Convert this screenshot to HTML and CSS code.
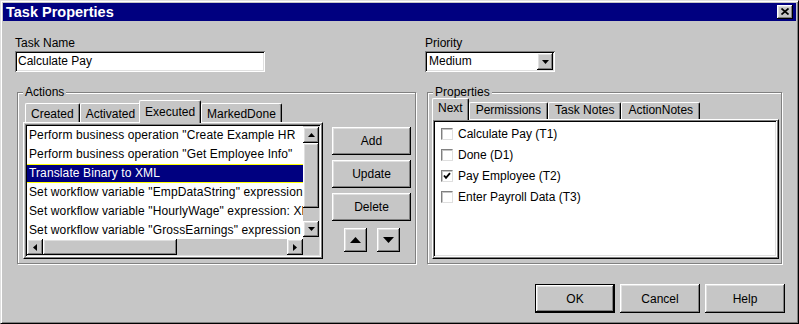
FILE: index.html
```html
<!DOCTYPE html>
<html lang="en">
<head>
<meta charset="utf-8">
<title>Task Properties</title>
<link rel="stylesheet" href="styles.css">
</head>
<body>
<div class="window">
  <div class="titlebar">
    <span class="title">Task Properties</span>
    <span class="close raised"><svg width="8" height="7" viewBox="0 0 8 7"><path d="M0.5 0.5L7.5 6.5M7.5 0.5L0.5 6.5" stroke="#000" stroke-width="1.7" fill="none"/></svg></span>
  </div>
  <div class="content">
    <div class="fields">
      <div class="field">
        <span class="label">Task Name</span>
        <div class="textbox sunken">Calculate Pay</div>
      </div>
      <div class="field">
        <span class="label">Priority</span>
        <div class="combo sunken">
          <span class="combo-text">Medium</span>
          <span class="combo-btn raised"><svg width="7" height="4" viewBox="0 0 7 4"><path d="M0 0H7L3.5 4Z" fill="#000"/></svg></span>
        </div>
      </div>
    </div>

    <div class="groups">
      <div class="group group-actions">
        <span class="legend">Actions</span>
        <div class="tabpane tabpane-actions">
          <div class="tabs tabs-actions">
            <div class="tab">Created</div>
            <div class="tab">Activated</div>
            <div class="tab tab-active">Executed</div>
            <div class="tab">MarkedDone</div>
          </div>
          <div class="panel panel-actions">
            <div class="listbox sunken">
              <div class="rows">
                <div class="row">Perform business operation "Create Example HR</div>
                <div class="row">Perform business operation "Get Employee Info"</div>
                <div class="row row-selected">Translate Binary to XML</div>
                <div class="row">Set workflow variable "EmpDataString" expression</div>
                <div class="row">Set workflow variable "HourlyWage" expression: XP</div>
                <div class="row">Set workflow variable "GrossEarnings" expression</div>
              </div>
              <div class="vscroll">
                <span class="sbtn raised"><svg width="7" height="4" viewBox="0 0 7 4"><path d="M0 4H7L3.5 0Z" fill="#000"/></svg></span>
                <span class="vthumb raised"></span>
                <span class="track"></span>
                <span class="sbtn raised"><svg width="7" height="4" viewBox="0 0 7 4"><path d="M0 0H7L3.5 4Z" fill="#000"/></svg></span>
              </div>
              <div class="hscroll">
                <span class="sbtn raised"><svg width="4" height="7" viewBox="0 0 4 7"><path d="M4 0V7L0 3.5Z" fill="#000"/></svg></span>
                <span class="hthumb raised"></span>
                <span class="track"></span>
                <span class="sbtn raised"><svg width="4" height="7" viewBox="0 0 4 7"><path d="M0 0V7L4 3.5Z" fill="#000"/></svg></span>
              </div>
              <div class="corner"></div>
            </div>
          </div>
        </div>
        <div class="side">
          <div class="btn raised">Add</div>
          <div class="btn raised">Update</div>
          <div class="btn raised">Delete</div>
          <div class="move">
            <span class="move-btn raised"><svg width="11" height="6" viewBox="0 0 11 6"><path d="M0 6H11L5.5 0Z" fill="#000"/></svg></span>
            <span class="move-btn raised"><svg width="11" height="6" viewBox="0 0 11 6"><path d="M0 0H11L5.5 6Z" fill="#000"/></svg></span>
          </div>
        </div>
      </div>

      <div class="group group-props">
        <span class="legend">Properties</span>
        <div class="tabpane tabpane-props">
          <div class="tabs tabs-props">
            <div class="tab tab-active">Next</div>
            <div class="tab">Permissions</div>
            <div class="tab">Task Notes</div>
            <div class="tab">ActionNotes</div>
          </div>
          <div class="panel panel-props">
            <div class="checklist sunken">
              <div class="check-row"><span class="checkbox"></span><span>Calculate Pay (T1)</span></div>
              <div class="check-row"><span class="checkbox"></span><span>Done (D1)</span></div>
              <div class="check-row"><span class="checkbox"><svg width="8" height="8" viewBox="0 0 8 8"><path d="M1 3.5L3 5.8L7 1.2" stroke="#000" stroke-width="1.9" fill="none"/></svg></span><span>Pay Employee (T2)</span></div>
              <div class="check-row"><span class="checkbox"></span><span>Enter Payroll Data (T3)</span></div>
            </div>
          </div>
        </div>
      </div>
    </div>

    <div class="footer">
      <div class="dlg-btn dlg-default"><span class="dlg-inner raised">OK</span></div>
      <div class="dlg-btn"><span class="dlg-inner raised">Cancel</span></div>
      <div class="dlg-btn"><span class="dlg-inner raised">Help</span></div>
    </div>
  </div>
</div>
</body>
</html>
```

FILE: styles.css
```css
* { box-sizing: border-box; }

html, body {
  margin: 0;
  padding: 0;
}

body {
  width: 799px;
  height: 324px;
  overflow: hidden;
  background: #c6c6c6;
  font-family: "Liberation Sans", Arial, sans-serif;
  font-size: 12px;
  line-height: 14px;
  color: #000;
}

.raised {
  background: #c6c6c6;
  box-shadow: inset -1px -1px 0 #000, inset 1px 1px 0 #fff, inset -2px -2px 0 #808080, inset 2px 2px 0 #dfdfdf;
}

.sunken {
  background: #fff;
  box-shadow: inset 1px 1px 0 #808080, inset -1px -1px 0 #fff, inset 2px 2px 0 #000, inset -2px -2px 0 #dfdfdf;
}

.window {
  width: 799px;
  height: 324px;
  background: #c6c6c6;
  border: 1px solid;
  border-color: #dfdfdf #000 #000 #dfdfdf;
  box-shadow: inset 1px 1px 0 #fff, inset -1px -1px 0 #808080;
  padding: 2px;
  display: flex;
  flex-direction: column;
}

.titlebar {
  height: 18px;
  background: #000080;
  display: flex;
  align-items: center;
  justify-content: space-between;
  padding: 0 3px 0 3px;
}

.title {
  color: #fff;
  font-weight: bold;
  font-size: 14.5px;
  line-height: 18px;
}

.close {
  width: 16px;
  height: 14px;
  display: flex;
  align-items: center;
  justify-content: center;
  padding-bottom: 1px;
}

.content {
  flex: 1;
  padding: 15px 11px 0 12px;
  display: flex;
  flex-direction: column;
}

.fields {
  display: grid;
  grid-template-columns: 410px 130px;
}

.label {
  display: block;
  height: 14px;
  margin-bottom: 1px;
}

.textbox {
  width: 250px;
  height: 21px;
  padding: 3px 3px 0 3px;
  white-space: nowrap;
}

.combo {
  width: 130px;
  height: 21px;
  padding: 2px;
  display: flex;
}

.combo-text {
  flex: 1;
  padding: 1px 0 0 2px;
}

.combo-btn {
  width: 16px;
  height: 17px;
  display: flex;
  align-items: center;
  justify-content: center;
}

.groups {
  display: flex;
  gap: 11px;
  margin: 20px 0 0 2px;
}

.group {
  position: relative;
  height: 172px;
  border: 1px solid #808080;
  box-shadow: inset 1px 1px 0 #fff, 1px 1px 0 #fff;
  display: flex;
  align-items: flex-start;
}

.group-actions {
  width: 399px;
  padding: 7px 0 0 5px;
}

.group-props {
  width: 355px;
  padding: 5px 0 0 4px;
}

.legend {
  position: absolute;
  top: -8px;
  left: 5px;
  padding: 0 2px;
  background: #c6c6c6;
  line-height: 14px;
  z-index: 1;
}

.tabpane-actions { width: 300px; }
.tabpane-props { width: 347px; }

.tabs {
  display: flex;
  align-items: flex-end;
  padding-left: 2px;
  position: relative;
  z-index: 2;
}

.tabs-actions { height: 22px; }
.tabs-props { height: 21px; }

.tab {
  background: #c6c6c6;
  border-top: 1px solid #fff;
  border-left: 1px solid #fff;
  border-right: 1px solid #000;
  box-shadow: inset -1px 0 0 #808080;
  border-radius: 2px 2px 0 0;
  padding: 0 5px;
  white-space: nowrap;
}

.tabs-actions .tab { height: 19px; padding-top: 3px; }
.tabs-actions .tab-active { height: 23px; padding: 4px 5px 0; margin: 0 -2px -1px; position: relative; }

.tabs-props .tab { height: 17px; padding: 0 6px; }
.tabs-props .tab-active { height: 22px; padding: 2px 5px 0; margin: 0 -2px -1px -2px; position: relative; }

.tab-active + .tab { margin-left: 2px; }

.panel {
  border: 1px solid;
  border-color: #fff #000 #000 #fff;
  box-shadow: inset -1px -1px 0 #808080;
}

.panel-actions { height: 137px; padding: 1px; }
.panel-props { height: 140px; padding: 0 1px 1px 0; }

.listbox {
  height: 100%;
  padding: 2px;
  display: grid;
  grid-template-columns: 276px 16px;
  grid-template-rows: 1fr 16px;
}

.rows {
  overflow: hidden;
  background: #fff;
}

.row {
  height: 19px;
  line-height: 19px;
  padding-left: 2px;
  white-space: nowrap;
  overflow: hidden;
  letter-spacing: 0.12px;
}

.row-selected {
  background: #000080;
  color: #fff;
  border-top: 1px solid #ffff00;
  border-bottom: 1px solid #ffff00;
  line-height: 17px;
}

.vscroll {
  background: #c6c6c6;
  display: flex;
  flex-direction: column;
  padding: 1px 0 2px;
}

.hscroll {
  background: #c6c6c6;
  display: flex;
}

.corner { background: #c6c6c6; }

.sbtn {
  width: 16px;
  height: 16px;
  flex: none;
  display: flex;
  align-items: center;
  justify-content: center;
}

.vthumb { height: 65px; flex: none; }
.hthumb { width: 134px; flex: none; }
.track { flex: 1; }

.side {
  width: 79px;
  margin: 27px 0 0 9px;
  display: flex;
  flex-direction: column;
  gap: 5px;
}

.btn {
  height: 28px;
  display: flex;
  align-items: center;
  justify-content: center;
}

.move {
  display: flex;
  justify-content: center;
  gap: 10px;
  margin-top: 2px;
}

.move-btn {
  width: 23px;
  height: 24px;
  display: flex;
  align-items: center;
  justify-content: center;
}

.checklist {
  height: 100%;
  padding: 3px 0 0 8px;
}

.check-row {
  height: 21px;
  display: flex;
  align-items: center;
  gap: 5px;
}

.checkbox {
  width: 12px;
  height: 12px;
  background: #fff;
  border: 1px solid;
  border-color: #808080 #dfdfdf #dfdfdf #808080;
  box-shadow: inset 1px 1px 0 #c6c6c6;
  display: flex;
  align-items: center;
  justify-content: center;
}

.footer {
  display: flex;
  justify-content: flex-end;
  gap: 5px;
  margin-top: 20px;
}

.dlg-btn {
  width: 80px;
  height: 29px;
  display: flex;
}

.dlg-default {
  border: 1px solid #000;
}

.dlg-inner {
  flex: 1;
  display: flex;
  align-items: center;
  justify-content: center;
}
```
